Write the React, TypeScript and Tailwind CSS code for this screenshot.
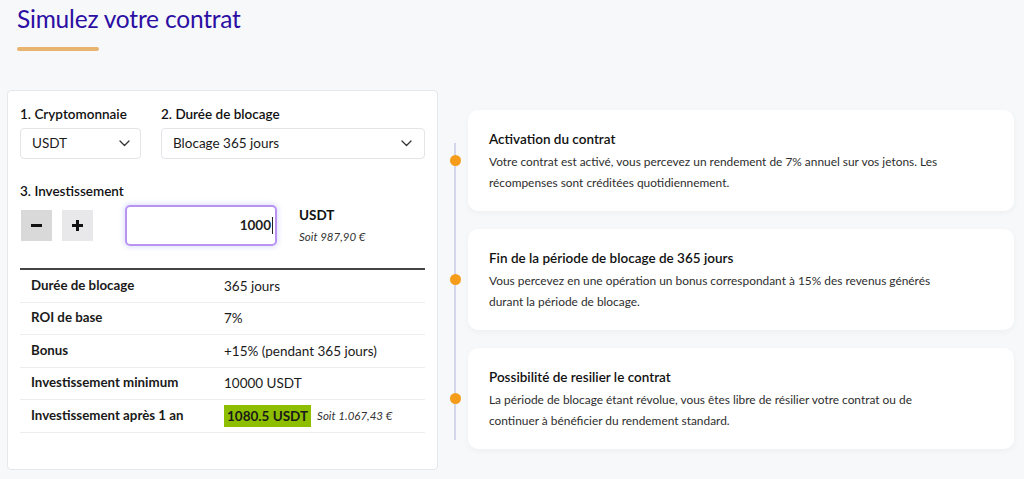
import React from "react";

const rows: { label: string; value: React.ReactNode }[] = [
  { label: "Durée de blocage", value: "365 jours" },
  { label: "ROI de base", value: "7%" },
  { label: "Bonus", value: "+15% (pendant 365 jours)" },
  { label: "Investissement minimum", value: "10000 USDT" },
  {
    label: "Investissement après 1 an",
    value: (
      <span className="flex items-center gap-[6px]">
        <span className="bg-[#8dbf00] px-[3px] h-[22px] flex items-center font-bold text-[#1a1a1a]">1080.5 USDT</span>
        <span className="italic text-[11.5px] text-[#333]">Soit 1.067,43 €</span>
      </span>
    ),
  },
];

const steps = [
  {
    title: "Activation du contrat",
    body: "Votre contrat est activé, vous percevez un rendement de 7% annuel sur vos jetons. Les récompenses sont créditées quotidiennement.",
  },
  {
    title: "Fin de la période de blocage de 365 jours",
    body: "Vous percevez en une opération un bonus correspondant à 15% des revenus générés durant la période de blocage.",
  },
  {
    title: "Possibilité de resilier le contrat",
    body: "La période de blocage étant révolue, vous êtes libre de résilier votre contrat ou de continuer à bénéficier du rendement standard.",
  },
];

function Chevron() {
  return (
    <svg width="11" height="7" viewBox="0 0 11 7" fill="none">
      <path d="M1 1l4.5 4.5L10 1" stroke="#333" strokeWidth="1.3" strokeLinecap="round" strokeLinejoin="round" />
    </svg>
  );
}

export default function App() {
  return (
    <div className="w-[1024px] h-[479px] overflow-hidden bg-[#f7f8fa] text-[#222] font-['Lato','Noto_Sans',sans-serif] text-[13.5px]">
      <div className="pl-[17px] pt-[2px]">
        <h1 className="text-[24.5px] leading-[34px] text-[#2b0fa3] font-normal tracking-[-0.2px]">Simulez votre contrat</h1>
        <div className="mt-[11px] w-[82px] h-[4px] rounded-full bg-[#e9b46f]" />
      </div>
      <div className="flex mt-[39px]">
        <div className="ml-[7px] w-[431px] h-[380px] bg-white border border-[#e6e7eb] rounded-[4px] px-[12px] pt-[14px]">
          <div className="flex gap-[20px]">
            <div className="w-[121px]">
              <div className="font-semibold leading-[18px] mb-[5px] text-[#111]">1. Cryptomonnaie</div>
              <div className="h-[31px] border border-[#e3e4e8] rounded-[4px] flex items-center justify-between pl-[11px] pr-[10px] text-[#1a1a1a]">
                <span>USDT</span>
                <Chevron />
              </div>
            </div>
            <div className="flex-1">
              <div className="font-semibold leading-[18px] mb-[5px] text-[#111]">2. Durée de blocage</div>
              <div className="h-[31px] border border-[#e3e4e8] rounded-[4px] flex items-center justify-between pl-[11px] pr-[12px] text-[#1a1a1a]">
                <span>Blocage 365 jours</span>
                <Chevron />
              </div>
            </div>
          </div>
          <div className="font-semibold leading-[18px] mt-[23px] text-[#111]">3. Investissement</div>
          <div className="flex items-center mt-[5px]">
            <button className="w-[31px] h-[31px] ml-[1px] bg-[#d9d9d9] flex items-center justify-center">
              <span className="block w-[11px] h-[2.5px] bg-[#111]" />
            </button>
            <button className="w-[31px] h-[31px] ml-[10px] bg-[#e8e8ea] flex items-center justify-center relative">
              <span className="block w-[11px] h-[2.5px] bg-[#111]" />
              <span className="absolute w-[2.5px] h-[11px] bg-[#111]" />
            </button>
            <div className="ml-[32px] w-[152px] h-[41px] border-2 border-[#b993f2] rounded-[5px] shadow-[0_0_4px_2px_rgba(150,160,240,0.25)] flex items-center justify-end pr-[2px] font-bold text-[#222]">
              <span>1000</span>
              <span className="w-px h-[17px] bg-[#222] ml-[1px]" />
            </div>
            <div className="ml-[22px] flex flex-col">
              <span className="font-bold leading-[16px] text-[#111]">USDT</span>
              <span className="italic text-[11.5px] leading-[16px] mt-[6px] text-[#333]">Soit 987,90 €</span>
            </div>
          </div>
          <div className="mt-[22px] border-t-2 border-[#444]">
            {rows.map((r) => (
              <div key={r.label} className="flex items-center h-[32.5px] border-b border-[#eceef1]">
                <div className="w-[193px] pl-[11px] font-bold text-[13.3px] text-[#1a1a1a]">{r.label}</div>
                <div className="pl-[11px] text-[#1a1a1a]">{r.value}</div>
              </div>
            ))}
          </div>
        </div>
        <div className="relative ml-[7px] w-[569px] mt-[20px] flex flex-col gap-[18px]">
          <div className="absolute left-[9px] top-[33px] bottom-[30px] w-[2px] bg-[#d3d6ea]" />
          {steps.map((s) => (
            <div key={s.title} className="flex items-center">
              <div className="w-[23px] flex justify-center">
                <span className="relative block w-[11px] h-[11px] rounded-full bg-[#f59c1a] ml-[-2px]" />
              </div>
              <div className="w-[546px] bg-white rounded-[10px] shadow-[0_2px_6px_rgba(0,0,0,0.04)] pl-[21px] pr-[55px] pt-[19px] pb-[19px] h-[101px]">
                <div className="font-semibold text-[13.5px] leading-[20px] text-[#111]">{s.title}</div>
                <div className="mt-[2px] text-[11.9px] leading-[21px] text-[#2e2e2e]">{s.body}</div>
              </div>
            </div>
          ))}
        </div>
      </div>
    </div>
  );
}
